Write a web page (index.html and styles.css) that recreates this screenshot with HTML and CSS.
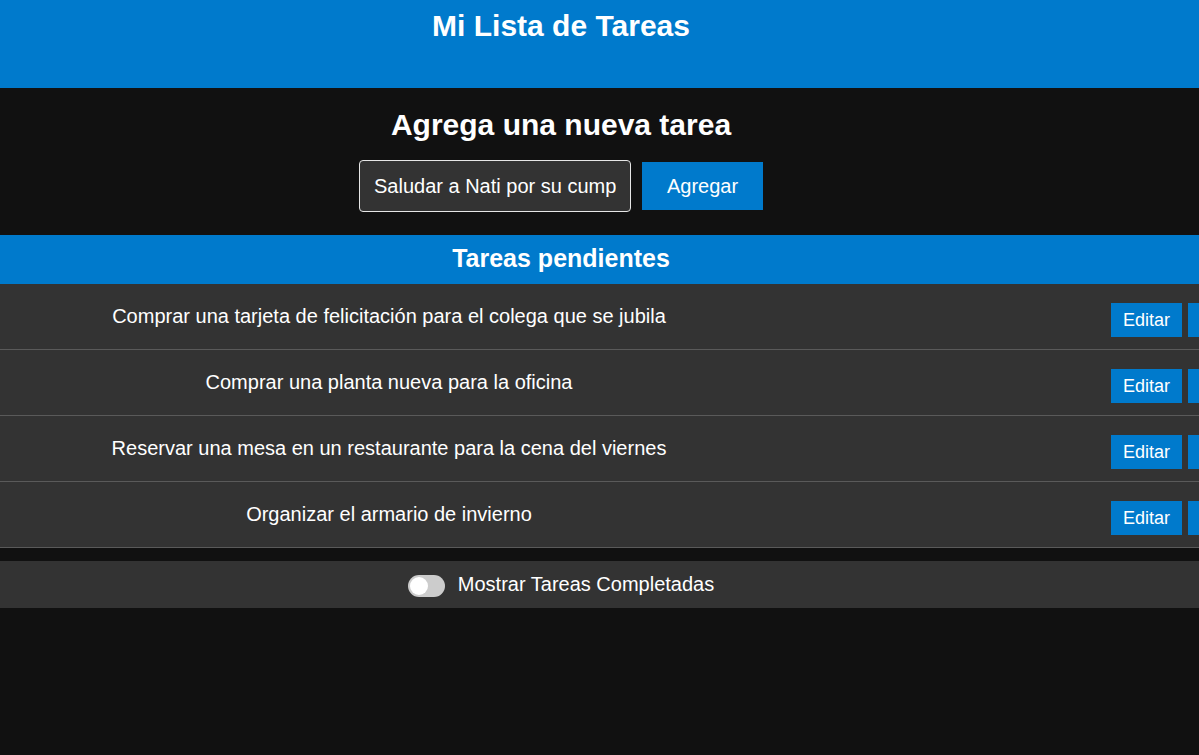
FILE: index.html
```html
<!DOCTYPE html>
<html lang="es">
<head>
<meta charset="utf-8">
<title>Mi Lista de Tareas</title>
<link rel="stylesheet" href="styles.css">
</head>
<body>
  <header class="top">
    <div class="inner">
      <h1 class="title">Mi Lista de Tareas</h1>
    </div>
  </header>

  <section class="add">
    <div class="inner">
      <h2 class="add-title">Agrega una nueva tarea</h2>
      <form class="add-form">
        <input class="add-input" type="text" value="Saludar a Nati por su cumpleaños">
        <button class="btn btn-add" type="button">Agregar</button>
      </form>
    </div>
  </section>

  <section class="pending">
    <div class="band">
      <div class="inner">
        <h2 class="band-title">Tareas pendientes</h2>
      </div>
    </div>
    <ul class="list">
      <li class="task">
        <span class="task-text">Comprar una tarjeta de felicitación para el colega que se jubila</span>
        <div class="actions"><button class="btn btn-sm">Editar</button><button class="btn btn-sm btn-del">Eliminar</button></div>
      </li>
      <li class="task">
        <span class="task-text">Comprar una planta nueva para la oficina</span>
        <div class="actions"><button class="btn btn-sm">Editar</button><button class="btn btn-sm btn-del">Eliminar</button></div>
      </li>
      <li class="task">
        <span class="task-text">Reservar una mesa en un restaurante para la cena del viernes</span>
        <div class="actions"><button class="btn btn-sm">Editar</button><button class="btn btn-sm btn-del">Eliminar</button></div>
      </li>
      <li class="task">
        <span class="task-text">Organizar el armario de invierno</span>
        <div class="actions"><button class="btn btn-sm">Editar</button><button class="btn btn-sm btn-del">Eliminar</button></div>
      </li>
    </ul>
  </section>

  <div class="toggle-bar">
    <div class="inner toggle-inner">
      <span class="switch"><span class="knob"></span></span>
      <span class="toggle-label">Mostrar Tareas Completadas</span>
    </div>
  </div>
</body>
</html>
```

FILE: styles.css
```css
html, body {
  margin: 0;
  padding: 0;
  overflow: hidden;
}
body {
  background: #111111;
  color: #ffffff;
  font-family: "Liberation Sans", Arial, sans-serif;
  width: 1199px;
  height: 755px;
}
.inner {
  width: 1122px;
  text-align: center;
}
.top {
  background: #007acc;
  height: 88px;
  box-sizing: border-box;
  padding-top: 9px;
}
.title {
  margin: 0;
  font-size: 30px;
  font-weight: bold;
  line-height: 34px;
}
.add {
  height: 147px;
  box-sizing: border-box;
  padding-top: 20px;
}
.add-title {
  margin: 0;
  font-size: 30px;
  font-weight: bold;
  line-height: 34px;
}
.add-form {
  margin: 18px 0 0;
  display: flex;
  justify-content: center;
  align-items: center;
  gap: 11px;
}
.add-input {
  width: 272px;
  height: 52px;
  box-sizing: border-box;
  background: #333333;
  border: 1px solid #e6e6e6;
  border-radius: 4px;
  color: #ffffff;
  font-family: "Liberation Sans", Arial, sans-serif;
  font-size: 20px;
  padding: 0 14px;
  outline: none;
}
.btn {
  background: #007acc;
  color: #ffffff;
  border: none;
  font-family: "Liberation Sans", Arial, sans-serif;
  cursor: pointer;
  padding: 0;
}
.btn-add {
  width: 121px;
  height: 48px;
  font-size: 20px;
}
.band {
  background: #007acc;
  height: 49px;
  box-sizing: border-box;
  padding-top: 9px;
}
.band-title {
  margin: 0;
  font-size: 25px;
  line-height: 28px;
  font-weight: bold;
}
.list {
  list-style: none;
  margin: 0;
  padding: 0;
}
.task {
  display: flex;
  align-items: center;
  height: 66px;
  box-sizing: border-box;
  background: #333333;
  border-bottom: 1px solid #5a5a5a;
  white-space: nowrap;
}
.task-text {
  flex: 0 0 778px;
  text-align: center;
  font-size: 20px;
  line-height: 23px;
}
.actions {
  display: flex;
  gap: 6px;
  padding-left: 333px;
  padding-top: 7px;
  flex-shrink: 0;
}
.btn-sm {
  width: 71px;
  height: 34px;
  font-size: 18px;
}
.btn-del {
  width: auto;
  padding: 0 14px;
}
.toggle-bar {
  margin-top: 13px;
  background: #333333;
  height: 47px;
}
.toggle-inner {
  height: 47px;
  display: flex;
  justify-content: center;
  align-items: center;
  gap: 13px;
}
.switch {
  display: inline-flex;
  align-items: center;
  width: 37px;
  height: 22px;
  box-sizing: border-box;
  padding: 0 2px;
  background: #cccccc;
  border-radius: 11px;
  margin-top: 2px;
}
.knob {
  width: 18px;
  height: 18px;
  border-radius: 50%;
  background: #ffffff;
}
.toggle-label {
  font-size: 20px;
  line-height: 23px;
}
```
